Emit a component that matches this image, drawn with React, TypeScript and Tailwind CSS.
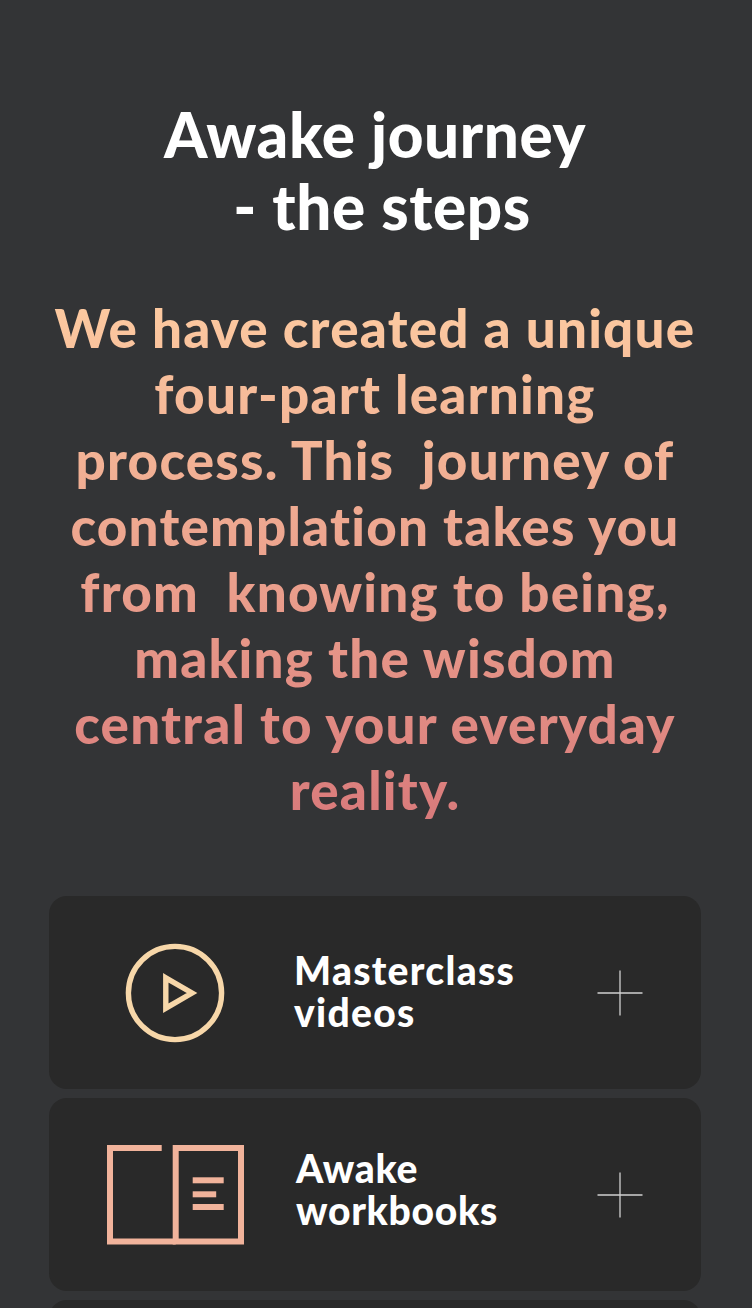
const font = "font-['Lato','Liberation_Sans',sans-serif]";

function Plus() {
  return (
    <svg width="46" height="46" viewBox="0 0 46 46" className="shrink-0">
      <path d="M0.5 23H45.5M23 0.5V45.5" stroke="#d0d0d0" strokeWidth="1.3" fill="none" />
    </svg>
  );
}

function PlayIcon() {
  return (
    <svg width="100" height="100" viewBox="0 0 100 100" className="-ml-[2px]">
      <circle cx="50" cy="50" r="46.6" stroke="#f7d7a9" strokeWidth="5.4" fill="none" />
      <path d="M40.8 34.8L67 50L40.8 65.2Z" stroke="#f7d7a9" strokeWidth="5.4" fill="none" />
    </svg>
  );
}

function BookIcon() {
  return (
    <svg width="137" height="100" viewBox="0 0 137 100">
      <g stroke="#f1b39b" strokeWidth="6" fill="none">
        <path d="M54.7 3H3V96.5H68.7" />
        <rect x="68.7" y="3" width="65.3" height="93.5" />
      </g>
      <g fill="#f1b39b">
        <rect x="85.7" y="32.3" width="31" height="6" />
        <rect x="85.7" y="46.3" width="23.5" height="6" />
        <rect x="85.7" y="59" width="31" height="6" />
      </g>
    </svg>
  );
}

function Card({ icon, title, text }: { icon: React.ReactNode; title: React.ReactNode; text: string }) {
  return (
    <div className="flex h-[193px] items-center rounded-[18px] bg-[#292929] pl-[58px] pr-[58px]">
      <div className="flex w-[137px] shrink-0 justify-center">{icon}</div>
      <div className={`${text} flex-1 text-[39px] font-black leading-[42px] text-white`}>{title}</div>
      <Plus />
    </div>
  );
}

export default function App() {
  return (
    <div className={`${font} h-[1308px] overflow-hidden bg-[#333436] pl-[49px] pr-[51px] pt-[98px] text-center`}>
      <h1 className="text-[62px] font-black leading-[72px] tracking-[0.6px] text-white">
        Awake journey
        <br />
        <span className="inline-block pl-[14px]">- the steps</span>
      </h1>
      <p className="mx-[-20px] mt-[53px] bg-gradient-to-b from-[#fdcba1] to-[#d97a7b] bg-clip-text text-[53px] font-black leading-[66px] tracking-[1.2px] text-transparent">
        We have created a unique
        <br />
        four-part learning
        <br />
        process. This&nbsp; journey of
        <br />
        contemplation takes you
        <br />
        from&nbsp; knowing to being,
        <br />
        making the wisdom
        <br />
        central to your everyday
        <br />
        reality.
      </p>
      <div className="mt-[73px] flex flex-col gap-[9px] text-left">
        <Card icon={<PlayIcon />} text="ml-[50px] pb-[3px] tracking-[1.3px]" title={<>Masterclass<br />videos</>} />
        <Card icon={<BookIcon />} text="ml-[52px] pb-[12px] tracking-[0.7px]" title={<>Awake<br />workbooks</>} />
        <div className="h-[193px] rounded-[18px] bg-[#292929]" />
      </div>
    </div>
  );
}
